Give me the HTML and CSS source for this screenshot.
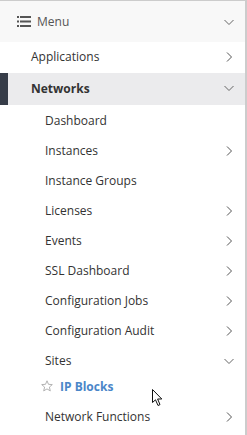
FILE: index.html
```html
<!DOCTYPE html>
<html lang="en">
<head>
    <meta charset="UTF-8">
    <title>Menu</title>
    <link rel="stylesheet" href="styles.css">
</head>
<body>
    <nav class="side-nav">
        <div class="nav-header">
            <span class="menu-title">
                <svg class="menu-icon" width="14" height="11" viewBox="0 0 14 11">
                    <rect x="0" y="0" width="2" height="2" fill="#555"/>
                    <rect x="3" y="0" width="11" height="2" fill="#555"/>
                    <rect x="0" y="4.5" width="2" height="2" fill="#555"/>
                    <rect x="3" y="4.5" width="11" height="2" fill="#555"/>
                    <rect x="0" y="9" width="2" height="2" fill="#555"/>
                    <rect x="3" y="9" width="11" height="2" fill="#555"/>
                </svg>
                Menu
            </span>
            <svg class="chev" width="12" height="12" viewBox="0 0 12 12"><path d="M1.5 4 L6 8.5 L10.5 4" fill="none" stroke="#666" stroke-width="1"/></svg>
        </div>

        <a class="nav-item top-level">
            <span>Applications</span>
            <svg class="chev" width="12" height="12" viewBox="0 0 12 12"><path d="M4 1.5 L8.5 6 L4 10.5" fill="none" stroke="#555" stroke-width="1"/></svg>
        </a>

        <a class="nav-item top-level active">
            <span>Networks</span>
            <svg class="chev" width="12" height="12" viewBox="0 0 12 12"><path d="M1.5 4 L6 8.5 L10.5 4" fill="none" stroke="#666" stroke-width="1"/></svg>
        </a>

        <div class="sub-list">
            <a class="nav-item sub"><span>Dashboard</span></a>
            <a class="nav-item sub"><span>Instances</span><svg class="chev" width="12" height="12" viewBox="0 0 12 12"><path d="M4 1.5 L8.5 6 L4 10.5" fill="none" stroke="#555" stroke-width="1"/></svg></a>
            <a class="nav-item sub"><span>Instance Groups</span></a>
            <a class="nav-item sub"><span>Licenses</span><svg class="chev" width="12" height="12" viewBox="0 0 12 12"><path d="M4 1.5 L8.5 6 L4 10.5" fill="none" stroke="#555" stroke-width="1"/></svg></a>
            <a class="nav-item sub"><span>Events</span><svg class="chev" width="12" height="12" viewBox="0 0 12 12"><path d="M4 1.5 L8.5 6 L4 10.5" fill="none" stroke="#555" stroke-width="1"/></svg></a>
            <a class="nav-item sub"><span>SSL Dashboard</span><svg class="chev" width="12" height="12" viewBox="0 0 12 12"><path d="M4 1.5 L8.5 6 L4 10.5" fill="none" stroke="#555" stroke-width="1"/></svg></a>
            <a class="nav-item sub"><span>Configuration Jobs</span><svg class="chev" width="12" height="12" viewBox="0 0 12 12"><path d="M4 1.5 L8.5 6 L4 10.5" fill="none" stroke="#555" stroke-width="1"/></svg></a>
            <a class="nav-item sub"><span>Configuration Audit</span><svg class="chev" width="12" height="12" viewBox="0 0 12 12"><path d="M4 1.5 L8.5 6 L4 10.5" fill="none" stroke="#555" stroke-width="1"/></svg></a>
            <a class="nav-item sub"><span>Sites</span><svg class="chev" width="12" height="12" viewBox="0 0 12 12"><path d="M1.5 4 L6 8.5 L10.5 4" fill="none" stroke="#666" stroke-width="1"/></svg></a>
            <a class="nav-item leaf">
                <svg class="star" width="12" height="12" viewBox="0 0 12 12"><path d="M6 0.8 L7.5 4.3 L11.3 4.6 L8.4 7.1 L9.3 10.9 L6 8.9 L2.7 10.9 L3.6 7.1 L0.7 4.6 L4.5 4.3 Z" fill="none" stroke="#aaa" stroke-width="0.9"/></svg>
                <span>IP Blocks</span>
                <!-- mouse pointer hovering in the screenshot -->
                <svg class="cursor" width="12" height="18" viewBox="0 0 12 18"><path d="M0.5 0.5 L0.5 13.5 L3.5 10.8 L6 16.5 L8 15.6 L5.6 10 L9.8 10 Z" fill="#fff" stroke="#111" stroke-width="1" stroke-linejoin="miter"/></svg>
            </a>
            <a class="nav-item sub"><span>Network Functions</span><svg class="chev" width="12" height="12" viewBox="0 0 12 12"><path d="M4 1.5 L8.5 6 L4 10.5" fill="none" stroke="#555" stroke-width="1"/></svg></a>
        </div>
    </nav>
</body>
</html>
```

FILE: styles.css
```css
body {
    margin: 0;
    padding: 0;
    font-family: 'Open Sans', 'Noto Sans', sans-serif;
    font-size: 12px;
    color: #333;
    background: #fff;
}

.side-nav {
    width: 247px;
    height: 435px;
    border-top: 1px solid #ccc;
    border-right: 2px solid #ccc;
    box-sizing: border-box;
}

.nav-header {
    display: flex;
    align-items: center;
    justify-content: space-between;
    height: 41px;
    padding: 0 10px 0 17px;
    background-color: #f8f8f8;
}

.menu-title {
    display: flex;
    align-items: center;
    gap: 6px;
    color: #555;
}

.nav-item {
    display: flex;
    align-items: center;
    justify-content: space-between;
    height: 30px;
    padding: 0 10px 2px 31px;
    box-sizing: border-box;
    color: #333;
}

.top-level {
    height: 31px;
}

.active {
    height: 32px;
    background-color: #ebebed;
    font-weight: bold;
    box-shadow: inset 8px 0 0 #363c48;
}

.sub {
    padding: 1px 10px 0 45px;
}

.leaf {
    position: relative;
    justify-content: flex-start;
    gap: 7px;
    height: 26px;
    padding: 0 10px 4px 41px;
    color: #4a86c8;
    font-weight: bold;
}

.cursor {
    position: absolute;
    left: 152px;
    top: 14px;
}

.chev {
    flex-shrink: 0;
}
```
